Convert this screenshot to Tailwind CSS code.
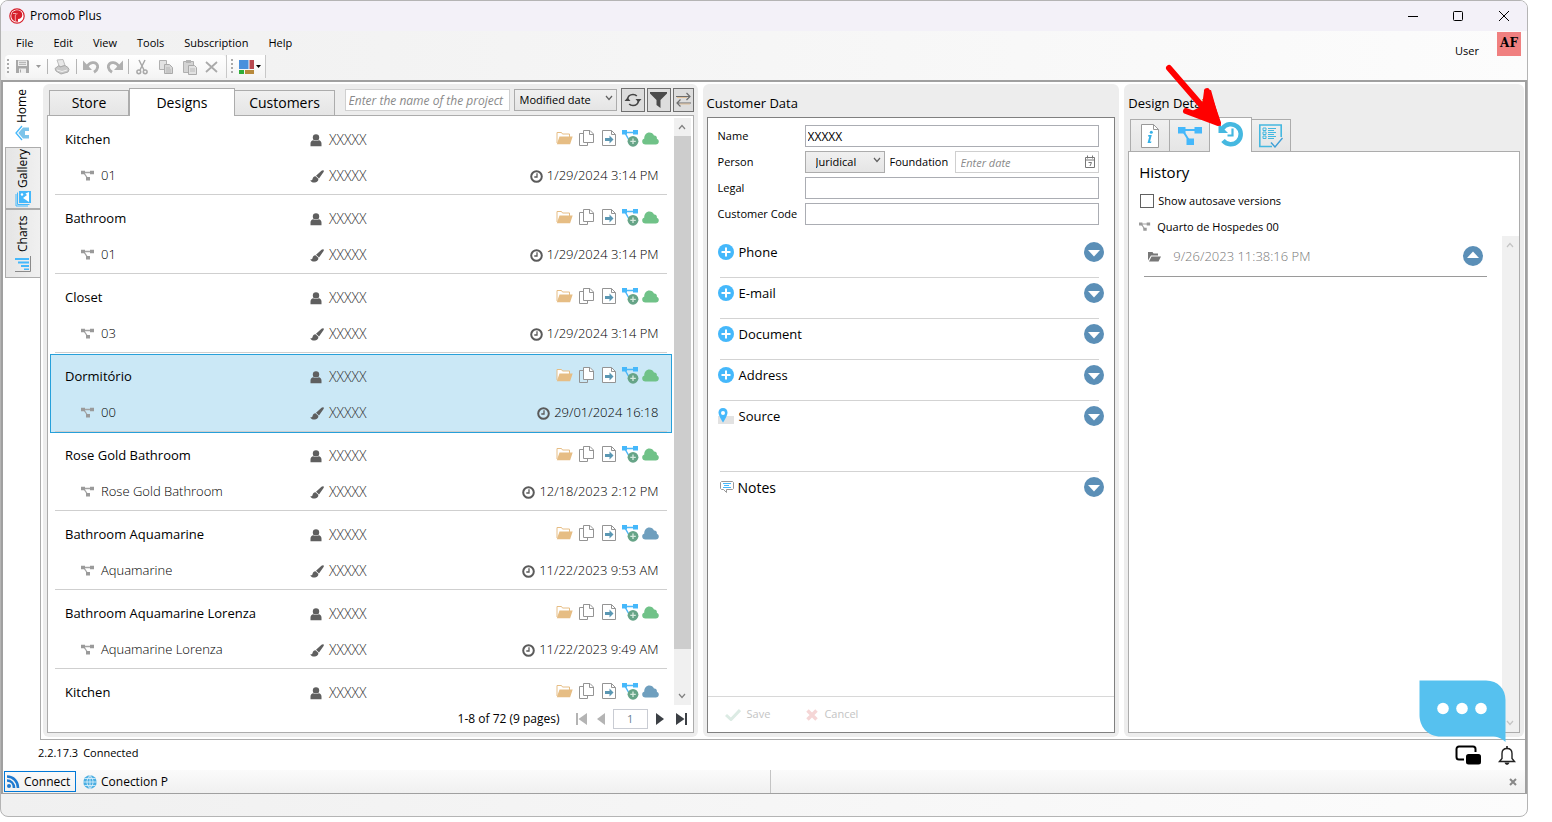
<!DOCTYPE html>
<html lang="en">

<head>
  <meta charset="UTF-8">
  <meta name="viewport" content="width=device-width, initial-scale=1.0">
  <title>Promob Plus</title>
  <script src="https://cdn.jsdelivr.net/npm/@tailwindcss/browser@4"></script>
</head>

<body class="h-screen bg-white pr-6 pb-[5px] overflow-hidden font-['Open_Sans','Noto_Sans',sans-serif] text-[11px] text-black">

  <!-- Shared icons -->
  <svg class="hidden" aria-hidden="true">
    <symbol id="i-person" viewBox="0 0 12 13"><circle cx="6" cy="3.4" r="3.2" fill="#5f5f5f"/><path d="M.5 12.3V9.5C.5 7.3 1.800 6.400 3.300 6.200c1.600 1.200 3.800 1.200 5.400 0 1.500.2 2.800 1.100 2.800 3.300v2.800z" fill="#5f5f5f"/></symbol>
    <symbol id="i-brush" viewBox="0 0 14 13"><path d="M13.600.4c.5.500.2 1.300-.2 1.900L9 8.500 6 5.800 11.500.8c.5-.5 1.500-.8 2.100-.4z" fill="#5f5f5f"/><path d="M5.500 6.300l2.800 2.500c.3 2.500-1.800 3.800-4.100 3.800-2 0-3.300-.9-3.900-2.300 1.500.3 2-.5 2.300-1.600.4-1.400 1.400-2.500 2.900-2.400z" fill="#5f5f5f"/></symbol>
    <symbol id="i-tree" viewBox="0 0 14 12"><path d="M2.500 2.500h9M3 3l4 6" stroke="#a3a3a3" stroke-width="1.300" fill="none"/><path d="M0 .8h4v3.500H0zM9 .8h4v3.500H9zM5 7h4v3.500H5z" fill="#9a9a9a"/></symbol>
    <symbol id="i-clock" viewBox="0 0 13 13"><circle cx="6.500" cy="6.500" r="5.300" fill="none" stroke="#5a5a5a" stroke-width="2"/><path d="M7 3.300V7H4.300" fill="none" stroke="#5a5a5a" stroke-width="1.300"/></symbol>
    <symbol id="i-folder" viewBox="0 0 17 14"><path d="M1 12V1.500h4.500l1 1.500h7V6" fill="#fff" stroke="#e6bd84"/><path d="M.8 13.300L3.500 5.500h13.200l-2.600 7.800z" fill="#e6bd84"/></symbol>
    <symbol id="i-copy" viewBox="0 0 15 17"><path d="M4.500 3.500h-4v12h8v-2.500" fill="none" stroke="#949494"/><path d="M4.500.5H11L14.500 4v8.500h-10z" fill="#fff" stroke="#949494"/><path d="M10.500.5v4h4" fill="none" stroke="#949494"/></symbol>
    <symbol id="i-export" viewBox="0 0 14 16"><path d="M.5.5h9L13.500 4.500v11H.5z" fill="#fff" stroke="#949494"/><path d="M9.500.5v4h4" fill="none" stroke="#949494"/><path d="M3 8h4.500V5.500L11.500 9.500l-4 4V11H3z" fill="#5a97b3"/></symbol>
    <symbol id="i-add" viewBox="0 0 17 17"><path d="M3 2.500h11M3 3l4 7" stroke="#4db8f8" stroke-width="1.500" fill="none"/><path d="M0 0h5v4.500H0zM11 0h5v4.500h-5z" fill="#45b8fb"/><circle cx="11" cy="11.300" r="5.400" fill="#66a487"/><path d="M11 8.500V14M8.300 11.300h5.500" stroke="#d8eadf" stroke-width="1.300"/></symbol>
    <symbol id="i-cloud" viewBox="0 0 17 13"><path d="M3.500 12.500C1.500 12.500.2 11.200.2 9.400c0-1.500.9-2.500 2.100-2.900C2 3.200 4.400.5 7.400.5c2.200 0 3.800 1.200 4.600 3 1.500-.3 2.900.8 2.900 2.500 0 .3 0 .5-.1.800 1.200.4 2 1.400 2 2.700 0 1.700-1.300 3-3 3z" fill="currentColor"/></symbol>
    <symbol id="i-plus" viewBox="0 0 16 16"><circle cx="8" cy="8" r="8" fill="#45b8fb"/><path d="M8 3.500v9M3.500 8h9" stroke="#fff" stroke-width="2"/></symbol>
    <symbol id="i-down" viewBox="0 0 20 20"><circle cx="10" cy="10" r="10" fill="#5b8fb7"/><path d="M4 8h12l-6 6.500z" fill="#fff"/></symbol>
    <symbol id="i-chev" viewBox="0 0 8 6"><path d="M1 1l3 3.500L7 1" fill="none" stroke="currentColor" stroke-width="1.200"/></symbol>
  </svg>

  <div class="relative flex h-full flex-col overflow-hidden rounded-lg border border-[#b4b4b4] bg-gradient-to-r from-[#f0f0f0] to-[#fcfcfc]">

    <!-- Title bar -->
    <header class="flex h-[30px] shrink-0 items-center bg-[#f3f1f8] pl-2">
      <svg class="size-4" viewBox="0 0 16 16"><circle cx="8" cy="8" r="7.200" fill="#fff" stroke="#d6202c" stroke-width="1.200"/><path d="M8 2.300c3.300 0 5.300 1.900 5.300 4.600S11.200 11 9 11v2.700C5 13.900 2.300 11.500 2.300 8S4.800 2.300 8 2.300z" fill="#d6202c"/><path d="M6.300 14V8c0-1.500 1-2.300 2.200-2.300M4 5.500h3" stroke="#f3a9ad" fill="none"/></svg>
      <h1 class="ml-[5px] text-xs">Promob Plus</h1>
      <div class="ml-auto flex">
        <button aria-label="Minimize" class="flex w-[45px] justify-center"><svg class="size-3" viewBox="0 0 12 12"><path d="M1 6.500h10" stroke="#000"/></svg></button>
        <button aria-label="Maximize" class="flex w-[45px] justify-center"><svg class="size-3" viewBox="0 0 12 12"><rect x="1.500" y="1.500" width="9" height="9" rx="1" fill="none" stroke="#000"/></svg></button>
        <button aria-label="Close" class="flex w-[47px] justify-center"><svg class="size-3" viewBox="0 0 12 12"><path d="M1 1l10 10M11 1L1 11" stroke="#000"/></svg></button>
      </div>
    </header>

    <!-- Menu and toolbar -->
    <div class="flex h-[49px] shrink-0 justify-between">
      <div>
        <nav class="flex h-6 items-center gap-5 pl-[15px]">
          <a href="#">File</a>
          <a href="#">Edit</a>
          <a href="#">View</a>
          <a href="#">Tools</a>
          <a href="#">Subscription</a>
          <a href="#">Help</a>
        </nav>
        <div class="flex h-[23px] items-center pl-1">
          <div class="flex h-full items-center rounded-sm bg-gradient-to-b from-white to-[#f4f4f4] pl-0.5 pr-1.5">
            <svg class="h-4 w-0.5" viewBox="0 0 2 16"><path d="M1 0v16" stroke="#aaa" stroke-width="2" stroke-dasharray="2 2"/></svg>
            <button aria-label="Save project" class="ml-1.5 flex items-center gap-1.5">
              <svg class="size-[15px]" viewBox="0 0 15 15"><path d="M1 1h12l1 1v12H1z" fill="#a8a8a8"/><path d="M3 1.500h9V7H3zM4 9.500h7V14H4z" fill="#eee"/><path d="M4 3.300h7M4 5.300h7M5.500 10.500v3" stroke="#aaa"/></svg>
              <svg class="h-[3px] w-[5px]" viewBox="0 0 5 3"><path d="M0 0h5L2.500 3z" fill="#999"/></svg>
            </button>
            <span class="mx-1.5 h-[15px] w-px bg-[#b5b5b5]"></span>
            <button aria-label="Print"><svg class="size-4" viewBox="0 0 16 16"><path d="M3 1l6-.5L11 6.500 5.500 8z" fill="#e8e8e8" stroke="#bbb"/><path d="M1 9.500l4-3 1 1.500 5-1.500 3 2 1 2-1 2.500-7 2L2 12z" fill="#c9c9c9" stroke="#aaa"/><path d="M3 11l5 1.500 5-1.500" fill="none" stroke="#f0f0f0"/></svg></button>
            <span class="mx-1.5 h-[15px] w-px bg-[#b5b5b5]"></span>
            <button aria-label="Undo"><svg class="size-4" viewBox="0 0 16 16"><path d="M4 8c2-5 9-6 10.500-1.500.7 3-.7 5-3.500 6.800" fill="none" stroke="#b0b0b0" stroke-width="2.800"/><path d="M0 1.500V11h9z" fill="#b0b0b0"/></svg></button>
            <button aria-label="Redo" class="ml-2"><svg class="size-4" viewBox="0 0 16 16"><path d="M12 8C10 3 3 2 1.500 6.500c-.7 3 .7 5 3.500 6.800" fill="none" stroke="#b0b0b0" stroke-width="2.800"/><path d="M16 1.500V11H7z" fill="#b0b0b0"/></svg></button>
            <span class="mx-[5px] h-[15px] w-px bg-[#b5b5b5]"></span>
            <button aria-label="Cut"><svg class="size-4" viewBox="0 0 16 16"><path d="M5 1l5 10M11 1L6 11" stroke="#a8a8a8" stroke-width="1.500"/><circle cx="4.800" cy="12.800" r="1.900" fill="none" stroke="#a8a8a8" stroke-width="1.500"/><circle cx="11.200" cy="12.800" r="1.900" fill="none" stroke="#a8a8a8" stroke-width="1.500"/></svg></button>
            <button aria-label="Copy" class="ml-2"><svg class="size-4" viewBox="0 0 16 16"><path d="M1.500 1.500h7v9h-7z" fill="#e2e2e2" stroke="#b0b0b0"/><path d="M6.500 5.500h5l3 3v6h-8z" fill="#d6d6d6" stroke="#aaa"/><path d="M8 9h4M8 11h5M8 13h5" stroke="#aaa" stroke-width=".7"/></svg></button>
            <button aria-label="Paste" class="ml-2"><svg class="size-4" viewBox="0 0 16 16"><path d="M1.500 2.500h10v11h-10z" fill="#d4d4d4" stroke="#b0b0b0"/><path d="M4 1h5v3H4z" fill="#b5b5b5"/><path d="M6.500 6.500h6l2 2v7h-8z" fill="#e2e2e2" stroke="#aaa"/><path d="M8 10h5M8 12h5" stroke="#aaa" stroke-width=".7"/></svg></button>
            <button aria-label="Delete" class="ml-1.5"><svg class="size-4" viewBox="0 0 16 16"><path d="M2 3l11 10M13 3L2 13" stroke="#aaa" stroke-width="1.800"/></svg></button>
          </div>
          <div class="flex h-full items-center border-x border-[#c8c8c8] bg-gradient-to-b from-white to-[#f4f4f4] px-1">
            <svg class="h-4 w-0.5" viewBox="0 0 2 16"><path d="M1 0v16" stroke="#aaa" stroke-width="2" stroke-dasharray="2 2"/></svg>
            <button aria-label="Layout" class="ml-1.5 flex items-center gap-0.5">
              <svg class="size-[15px]" viewBox="0 0 15 15"><path d="M0 1h9.500v9H0z" fill="#4a90dc"/><path d="M10.500 1H15v9h-4.500z" fill="#b84850"/><path d="M0 11h5v4H0z" fill="#2fae38"/><path d="M6 11h9v4H6z" fill="#b88a3c"/></svg>
              <svg class="h-[3px] w-[5px]" viewBox="0 0 5 3"><path d="M0 0h5L2.500 3z" fill="#000"/></svg>
            </button>
          </div>
        </div>
      </div>
      <div class="flex pr-1.5">
        <span class="mt-3 mr-[18px]">User</span>
        <button class="mt-px size-6 bg-[#f08080] pb-0.5 font-['DejaVu_Serif',serif] text-xs leading-none font-bold">AF</button>
      </div>
    </div>

    <!-- Work area -->
    <div class="flex min-h-0 flex-1 border-x-2 border-t-2 border-[#a0a0a0] bg-white">
      <aside class="flex w-[38px] shrink-0 flex-col text-xs">
        <button class="flex h-[65px] rotate-180 items-center justify-center gap-[3px] [writing-mode:vertical-rl]">
          <svg class="h-3.5 w-4 rotate-90" viewBox="0 0 16 14"><path d="M1 7L8 1l7 6" fill="none" stroke="#45b8fb" stroke-width="1.300"/><path d="M2.500 8L8 3.300 13.500 8V14H10v-4H6v4H2.500z" fill="#7cc4ea"/></svg>
          <span>Home</span>
        </button>
        <button class="ml-0.5 flex h-[62px] rotate-180 items-center justify-center gap-[3px] border border-[#acacac] bg-gradient-to-r from-[#f0f0f0] to-[#e5e5e5] [writing-mode:vertical-rl]">
          <svg class="size-4 rotate-90" viewBox="0 0 16 16"><path d="M1 13V1h12M2.500 14.500v-12h12" fill="none" stroke="#45b8fb"/><rect x="4" y="4" width="12" height="12" fill="#45b8fb"/><path d="M5 14l4-6 3 4 1.500-1.500L15 14z" fill="#fff"/><circle cx="12.500" cy="7" r="1.200" fill="#fff"/></svg>
          <span>Gallery</span>
        </button>
        <button class="ml-0.5 flex h-[69px] rotate-180 items-center justify-center gap-1 border border-[#acacac] bg-gradient-to-r from-[#f0f0f0] to-[#e5e5e5] [writing-mode:vertical-rl]">
          <svg class="size-4 rotate-180" viewBox="0 0 16 16"><path d="M0 2h14v2H0zM3 5.500h11v2H3zM6 9h8v2H6zM9 12.500h5v1.500H9z" fill="#45b8fb"/><path d="M15.500 0v15.500H0" fill="none" stroke="#8a8a8a"/></svg>
          <span>Charts</span>
        </button>
        <div class="flex-1 border-r border-[#acacac]"></div>
      </aside>

      <main class="grid min-w-0 flex-1 grid-cols-[655fr_417fr_400fr] gap-[5px] border-b border-[#acacac] py-0.5 pr-px pl-0.5">

        <!-- Designs -->
        <section class="flex min-h-0 min-w-0 flex-col rounded-md bg-[#ededed] p-1 pt-0">
          <div class="flex h-[31px] shrink-0 items-end">
            <div class="flex items-end pl-0.5 text-sm" role="tablist">
              <button role="tab" class="h-[25px] w-20 border border-b-0 border-[#acacac] bg-gradient-to-b from-[#f0f0f0] to-[#e5e5e5]">Store</button>
              <button role="tab" aria-selected="true" class="relative z-10 -mb-px h-7 w-[106px] border border-b-0 border-[#acacac] bg-white">Designs</button>
              <button role="tab" class="h-[25px] w-[100px] border border-l-0 border-b-0 border-[#acacac] bg-gradient-to-b from-[#f0f0f0] to-[#e5e5e5]">Customers</button>
            </div>
            <div class="mb-[3px] ml-auto flex items-center">
              <input type="text" aria-label="Project name" placeholder="Enter the name of the project or customer" class="h-[22px] w-[165px] border border-[#d0d0d0] bg-white px-[3px] text-xs placeholder:text-[#8a8a8a] placeholder:italic">
              <div class="relative ml-1">
                <select aria-label="Sort by" class="h-[22px] w-[103px] appearance-none border border-[#acacac] bg-gradient-to-b from-[#f0f0f0] to-[#e5e5e5] pl-[5px] text-[11px]"><option>Modified date</option></select>
                <svg class="pointer-events-none absolute top-1.5 right-1 h-1.5 w-2 text-[#606060]"><use href="#i-chev"/></svg>
              </div>
              <button aria-label="Refresh" class="ml-1 flex size-6 items-center justify-center border border-[#707070] bg-[#dddddd]"><svg class="h-4 w-[18px]" viewBox="0 0 18 16"><path d="M3.500 8C3.500 4.500 6 2.500 9 2.500c1.500 0 2.800.4 3.800 1.500M14.500 8c0 3.500-2.500 5.500-5.500 5.500-1.500 0-2.800-.4-3.800-1.500" fill="none" stroke="#444" stroke-width="1.600"/><path d="M.5 9h6L3.500 5.500zM11.500 7h6L14.500 10.500z" fill="#444"/></svg></button>
              <button aria-label="Filter" class="ml-0.5 flex size-6 items-center justify-center border border-[#707070] bg-[#dddddd]"><svg class="h-4 w-[17px]" viewBox="0 0 17 16"><path d="M0 0h17v1.500L10.500 8v8L6.500 13V8L0 1.500z" fill="#4b4b4b"/></svg></button>
              <button aria-label="Swap" class="ml-0.5 flex h-6 w-[21px] items-center justify-center border border-[#707070] bg-[#dddddd]"><svg class="h-4 w-[15px]" viewBox="0 0 15 16"><path d="M0 4.500h14M10.500 1l3.500 3.500L10.500 8" fill="none" stroke="#6d6d6d" stroke-width="1.200"/><path d="M15 11H1M4.500 7.500L1 11l3.500 3.500" fill="none" stroke="#6d6d6d" stroke-width="1.200"/><path d="M1 5.500h10M4 12h10" stroke="#dfb98a" stroke-width=".8"/></svg></button>
            </div>
          </div>
          <div class="flex min-h-0 flex-1 flex-col border border-[#acacac] bg-white">
            <div class="flex min-h-0 flex-1 pt-px">
              <ul id="designList" class="ml-0.5 min-w-0 flex-1 overflow-hidden text-[13px]"></ul>
              <div class="mt-px mr-0.5 ml-0.5 flex w-[17px] flex-col items-center bg-[#f0f0f0]">
                <svg class="my-1.5 h-1.5 w-2 rotate-180 text-[#808080]"><use href="#i-chev"/></svg>
                <div class="w-full flex-[514] bg-[#cdcdcd]"></div>
                <div class="flex-[38]"></div>
                <svg class="my-1.5 h-1.5 w-2 text-[#808080]"><use href="#i-chev"/></svg>
              </div>
            </div>
            <div class="flex h-[27px] shrink-0 items-center justify-end pr-1.5">
              <span class="text-xs">1-8 of 72 (9 pages)</span>
              <button aria-label="First page" class="ml-4"><svg class="h-3 w-[11px]" viewBox="0 0 11 12"><path d="M0 0h2v12H0zM11 0v12L2.500 6z" fill="#b4b4b4"/></svg></button>
              <button aria-label="Previous page" class="ml-2.5"><svg class="h-3 w-2" viewBox="0 0 8 12"><path d="M8 0v12L0 6z" fill="#b4b4b4"/></svg></button>
              <input type="text" aria-label="Page" value="1" class="mx-2 h-5 w-[35px] border border-[#c9ccd3] bg-white text-center text-[11px] text-[#6a7f92]">
              <button aria-label="Next page"><svg class="h-3 w-2" viewBox="0 0 8 12"><path d="M0 0v12L8 6z" fill="#3c4045"/></svg></button>
              <button aria-label="Last page" class="ml-3"><svg class="h-3 w-[11px]" viewBox="0 0 11 12"><path d="M9 0h2v12H9zM0 0v12L8.500 6z" fill="#3c4045"/></svg></button>
            </div>
          </div>
        </section>

        <!-- Customer data -->
        <section class="flex min-h-0 min-w-0 flex-col rounded-md bg-[#ededed] p-1 pt-0">
          <h2 class="flex h-[33px] shrink-0 items-center pt-1.5 text-[13px]">Customer Data</h2>
          <div class="flex min-h-0 flex-1 flex-col border border-[#808080] bg-white">
            <form class="grid grid-cols-[87px_1fr] items-center gap-y-1 pt-[7px] pr-[15px] pl-2.5">
              <label for="custName">Name</label>
              <input id="custName" type="text" value="XXXXX" class="h-[22px] w-full min-w-0 border border-[#abadb3] px-0.5 text-xs">
              <label for="custPerson">Person</label>
              <div class="flex items-center">
                <div class="relative">
                  <select id="custPerson" class="h-[22px] w-20 appearance-none border border-[#acacac] bg-gradient-to-b from-[#f0f0f0] to-[#e5e5e5] pl-2.5"><option>Juridical</option></select>
                  <svg class="pointer-events-none absolute top-1.5 right-1 h-1.5 w-2 text-[#606060]"><use href="#i-chev"/></svg>
                </div>
                <label for="custDate" class="ml-[5px] w-[65px]">Foundation</label>
                <div class="relative min-w-0 flex-1">
                  <input id="custDate" type="text" placeholder="Enter date" class="h-[22px] w-full border border-[#cfcfcf] px-[5px] placeholder:text-[#8a8a8a] placeholder:italic">
                  <svg class="absolute top-1 right-1 h-[13px] w-2.5" viewBox="0 0 10 13"><path d="M.5 2.500h9v10h-9zM.5 5h9" fill="none" stroke="#777"/><path d="M2.500.5v3M7.500.5v3M3.500 7.500h3L5 11" fill="none" stroke="#777"/></svg>
                </div>
              </div>
              <label for="custLegal">Legal</label>
              <input id="custLegal" type="text" class="h-[22px] w-full min-w-0 border border-[#abadb3] px-0.5 text-xs">
              <label for="custCode">Customer Code</label>
              <input id="custCode" type="text" class="h-[22px] w-full min-w-0 border border-[#abadb3] px-0.5 text-xs">
            </form>

            <div class="mt-3 flex flex-col pr-2.5 pl-2.5 text-[13px]">
              <div class="h-10 pt-[5px]"><div class="flex h-5 items-center gap-[5px]"><svg class="size-4"><use href="#i-plus"/></svg><h3 class="pt-0.5">Phone</h3><button aria-label="Expand phone" class="ml-auto"><svg class="size-5"><use href="#i-down"/></svg></button></div></div>
              <hr class="mr-[5px] ml-0.5 border-[#d3d3d3]">
              <div class="h-10 pt-[5px]"><div class="flex h-5 items-center gap-[5px]"><svg class="size-4"><use href="#i-plus"/></svg><h3 class="pt-0.5">E-mail</h3><button aria-label="Expand e-mail" class="ml-auto"><svg class="size-5"><use href="#i-down"/></svg></button></div></div>
              <hr class="mr-[5px] ml-0.5 border-[#d3d3d3]">
              <div class="h-10 pt-[5px]"><div class="flex h-5 items-center gap-[5px]"><svg class="size-4"><use href="#i-plus"/></svg><h3 class="pt-0.5">Document</h3><button aria-label="Expand document" class="ml-auto"><svg class="size-5"><use href="#i-down"/></svg></button></div></div>
              <hr class="mr-[5px] ml-0.5 border-[#d3d3d3]">
              <div class="h-10 pt-[5px]"><div class="flex h-5 items-center gap-[5px]"><svg class="size-4"><use href="#i-plus"/></svg><h3 class="pt-0.5">Address</h3><button aria-label="Expand address" class="ml-auto"><svg class="size-5"><use href="#i-down"/></svg></button></div></div>
              <hr class="mr-[5px] ml-0.5 border-[#d3d3d3]">
              <div class="h-[70px] pt-[5px]"><div class="flex h-5 items-center gap-[5px]"><svg class="size-4" viewBox="0 0 16 16"><path d="M0 8h16v8H0z" fill="#e2e2e2"/><path d="M5 0c2.800 0 4.500 2 4.500 4.500C9.500 8 5 14.500 5 14.500S.5 8 .5 4.500C.5 2 2.200 0 5 0z" fill="#45b8fb"/><circle cx="5" cy="5" r="2" fill="#fff"/></svg><h3 class="pt-0.5">Source</h3><button aria-label="Expand source" class="ml-auto"><svg class="size-5"><use href="#i-down"/></svg></button></div></div>
              <hr class="mr-[5px] ml-0.5 border-[#d3d3d3]">
              <div class="h-10 pt-[5px]"><div class="flex h-5 items-center gap-1 pl-0.5 text-sm"><svg class="h-3 w-3.5" viewBox="0 0 14 12"><path d="M1.500.5h11l1 1v6l-1 1H6.500v3L3.500 8.500h-2l-1-1v-6z" fill="#fff" stroke="#999"/><path d="M3 2.500h8M4 4.500h5M3 6.500h8" stroke="#45b8fb"/></svg><h3 class="pt-0.5">Notes</h3><button aria-label="Expand notes" class="ml-auto"><svg class="size-5"><use href="#i-down"/></svg></button></div></div>
            </div>

            <div class="mt-auto flex h-9 items-center gap-9 border-t border-[#d8d8d8] pl-[17px] text-[#c4c4c4]">
              <button class="flex items-center gap-1.5"><svg class="h-3 w-4" viewBox="0 0 16 12"><path d="M1 6l5 4.500L15 1" fill="none" stroke="#dcebe4" stroke-width="3"/></svg>Save</button>
              <button class="flex items-center gap-1.5"><svg class="size-3" viewBox="0 0 12 12"><path d="M1.500 1.500l9 9M10.500 1.500l-9 9" stroke="#f5d6d6" stroke-width="3.500"/></svg>Cancel</button>
            </div>
          </div>
        </section>

        <!-- Design details -->
        <section class="relative flex min-h-0 min-w-0 flex-col rounded-md bg-[#ededed] p-1 pt-0">
          <h2 class="flex h-[33px] shrink-0 items-center pt-1.5 text-[13px]">Design Details</h2>
          <div class="flex h-[34px] shrink-0 items-end pl-0.5" role="tablist">
            <button role="tab" aria-label="Information" class="flex h-8 w-10 items-center justify-center border border-b-0 border-[#acacac] bg-gradient-to-b from-[#f0f0f0] to-[#e5e5e5]"><svg class="h-6 w-[18px]" viewBox="0 0 18 24"><path d="M.5.5h12l5 5v18H.5z" fill="#fff" stroke="#999"/><path d="M12.500.5v5h5" fill="none" stroke="#999"/><path d="M7.300 11h3.500l-1.800 6.500h1.500l-.5 1.500H6.500L8.300 12.500H7z" fill="#35b1e8"/><circle cx="10.300" cy="8.300" r="1.500" fill="#35b1e8"/></svg></button>
            <button role="tab" aria-label="Structure" class="flex h-8 w-[39px] items-center justify-center border border-x-0 border-b-0 border-[#acacac] bg-gradient-to-b from-[#f0f0f0] to-[#e5e5e5]"><svg class="h-5 w-6" viewBox="0 0 24 20"><path d="M4 4h16M5 5l7 11" stroke="#45b8fb" stroke-width="2" fill="none"/><path d="M0 1h7.500v6.500H0zM16.500 1H24v6.500h-7.500zM8.500 12.500H16V19H8.500z" fill="#45b8fb"/></svg></button>
            <button role="tab" aria-selected="true" aria-label="History" class="relative -mb-px flex h-[35px] w-[43px] items-center justify-center border border-b-0 border-[#acacac] bg-white pb-0.5"><svg class="size-[26px]" viewBox="0 0 26 26"><path d="M4.500 7.500A10 10 0 1 1 5 19.500" fill="none" stroke="#45b8e0" stroke-width="4.500"/><path d="M.5 2.500V12H10z" fill="#45b8e0"/><path d="M14.500 7.500v7H9.500" fill="none" stroke="#45b8e0" stroke-width="2.200"/></svg></button>
            <button role="tab" aria-label="Checklist" class="flex h-8 w-[39px] items-center justify-center border border-l-0 border-b-0 border-[#acacac] bg-gradient-to-b from-[#f0f0f0] to-[#e5e5e5]"><svg class="size-6" viewBox="0 0 24 24"><path d="M13 22.500H.8V1h21.400v12" fill="none" stroke="#45b8e0" stroke-width="1.600"/><path d="M4 4h3v2.500H4zM4 8h3v2.500H4zM4 12h3v2.500H4z" fill="none" stroke="#45b8e0"/><path d="M9 4.500h8M9 6.500h6M9 8.500h8M9 10.500h6M9 12.500h8M9 14.500h6" stroke="#45b8e0"/><path d="M12 18.500l4 4.500 7.500-9" fill="none" stroke="#3f9fd6" stroke-width="1.400"/></svg></button>
          </div>
          <div class="flex min-h-0 flex-1 flex-col border border-[#acacac] bg-white">
            <div class="shrink-0 pt-2 pl-2.5">
              <h3 class="text-[15px] leading-6">History</h3>
              <div class="mt-2 flex h-[18px] items-center gap-1 pl-px">
                <input id="autosave" type="checkbox" class="size-3.5 appearance-none border border-[#606060] bg-white">
                <label for="autosave">Show autosave versions</label>
              </div>
              <div class="mt-2 flex h-[18px] items-center gap-1.5"><svg class="h-3 w-3"><use href="#i-tree"/></svg><span>Quarto de Hospedes 00</span></div>
            </div>
            <div class="flex min-h-0 flex-1">
              <div class="flex-1 pr-[15px] pl-[15px]">
                <div class="flex h-[41px] items-center border-b border-[#9a9a9a] pr-1">
                  <svg class="ml-1 h-[11px] w-[13px]" viewBox="0 0 13 11"><path d="M0 9.500V1h4.500l1 1.500H10V4.500H3z" fill="#777"/><path d="M1 10.500L3.500 5.500H13l-2.500 5z" fill="#777"/></svg>
                  <span class="ml-3 pt-0.5 text-[13px] font-light text-[#777]">9/26/2023 11:38:16 PM</span>
                  <button aria-label="Collapse version" class="ml-auto"><svg class="size-5 rotate-180"><use href="#i-down"/></svg></button>
                </div>
              </div>
              <div class="flex w-[17px] flex-col items-center justify-between bg-[#f0f0f0] py-1.5 text-[#c4c4c4]">
                <svg class="h-1.5 w-2 rotate-180"><use href="#i-chev"/></svg>
                <svg class="h-1.5 w-2"><use href="#i-chev"/></svg>
              </div>
            </div>
          </div>

          <!-- Pointer over the history tab -->
          <svg class="pointer-events-none absolute -top-5 left-10 z-20 h-16 w-[62px]" viewBox="0 0 62 64"><path d="M5 4L44 49" fill="none" stroke="#f00" stroke-width="6" stroke-linecap="round"/><path d="M43 27L54 59M22 47L54 59" fill="none" stroke="#f00" stroke-width="6" stroke-linecap="round"/><path d="M40 27l-2 15L30 46l-8 3 35 13-10-36z" fill="#f00"/></svg>
        </section>
      </main>
    </div>

    <!-- Status -->
    <div class="flex h-[30px] shrink-0 items-center gap-[5px] border-x-2 border-[#a0a0a0] bg-white pr-[9px] pl-[35px]">
      <span class="pb-1">2.2.17.3</span>
      <span class="pb-1">Connected</span>
      <button aria-label="Windows" class="ml-auto"><svg class="h-5 w-[26px]" viewBox="0 0 26 20"><path d="M9 14.500H4A2.500 2.500 0 0 1 1.500 12V4A2.500 2.500 0 0 1 4 1.500h14A2.500 2.500 0 0 1 20.500 4v3" fill="none" stroke="#000" stroke-width="2"/><rect x="11" y="9" width="15" height="10.500" rx="2.500"/></svg></button>
      <button aria-label="Notifications" class="ml-3"><svg class="h-[19px] w-[18px]" viewBox="0 0 18 19"><path d="M1.500 15.500L4 12.500V7.500C4 4.500 6 2.500 9 2.500s5 2 5 5v5l2.500 3z" fill="none" stroke="#222" stroke-width="1.400"/><path d="M6.500 16.500h5C11 18 10 18.800 9 18.800S7 18 6.500 16.500zM8.200 0h1.600v3H8.200z" fill="#222"/></svg></button>
    </div>

    <!-- Open connections -->
    <div class="flex h-6 shrink-0 items-center border-x-2 border-b border-[#a0a0a0] bg-gradient-to-b from-[#fbfbfb] to-[#f0f0f0] text-xs">
      <div class="flex h-full flex-[77] items-center border-r border-[#c4c4c4] pl-px">
        <button class="flex h-[21px] w-[72px] items-center gap-1 border border-[#0078d7] pl-0.5"><svg class="size-[13px]" viewBox="0 0 13 13"><circle cx="2" cy="11" r="2" fill="#1f7ad0"/><path d="M0 5.500c4 0 7 3 7 7.500M0 1.500c6.500 0 11 5 11 11.500" fill="none" stroke="#1f7ad0" stroke-width="2.600"/></svg>Connect</button>
        <button class="ml-[7px] flex items-center gap-1"><svg class="size-3.5" viewBox="0 0 14 14"><circle cx="7" cy="7" r="6.700" fill="#4aaee2"/><path d="M0 7h14M1.500 3.500h11M1.500 10.500h11M7 0v14M7 .5C3 4 3 10 7 13.500M7 .5c4 3.500 4 9.500 0 13" fill="none" stroke="#e4f4fd" stroke-width=".8"/></svg>Conection P</button>
      </div>
      <div class="flex flex-[75] justify-end pr-2">
        <button aria-label="Close connections"><svg class="size-2" viewBox="0 0 8 8"><path d="M1 1l6 6M7 1L1 7" stroke="#888" stroke-width="2"/></svg></button>
      </div>
    </div>
    <footer class="h-[22px] shrink-0"></footer>

    <!-- Chat -->
    <button aria-label="Chat" class="absolute right-[21px] bottom-[74px] z-30"><svg class="h-[62px] w-[87px]" viewBox="0 0 87 62"><path d="M.5.500H67C79 .5 86.500 9 86.500 20v42C83 58.500 79 56.500 72 56.500H22C8 56.500.5 46 .5 35z" fill="#56c1ef"/><circle cx="24" cy="28.500" r="5.800" fill="#fff"/><circle cx="43" cy="28.500" r="5.800" fill="#fff"/><circle cx="62" cy="28.500" r="5.800" fill="#fff"/></svg></button>
  </div>

  <script>
    const designs = [
      { title: "Kitchen", version: "01", date: "1/29/2024 3:14 PM", synced: true },
      { title: "Bathroom", version: "01", date: "1/29/2024 3:14 PM", synced: true },
      { title: "Closet", version: "03", date: "1/29/2024 3:14 PM", synced: true },
      { title: "Dormitório", version: "00", date: "29/01/2024 16:18", synced: true, selected: true },
      { title: "Rose Gold Bathroom", version: "Rose Gold Bathroom", date: "12/18/2023 2:12 PM", synced: true },
      { title: "Bathroom Aquamarine", version: "Aquamarine", date: "11/22/2023 9:53 AM", synced: false },
      { title: "Bathroom Aquamarine Lorenza", version: "Aquamarine Lorenza", date: "11/22/2023 9:49 AM", synced: true },
      { title: "Kitchen", version: "", date: "", synced: false }
    ];

    document.getElementById('designList').innerHTML = designs.map(d => `
      <li class="h-[79px] border px-1 ${d.selected ? 'border-[#26a0da] bg-[#cbe8f6]' : 'border-transparent'}">
        <div class="grid h-full grid-cols-[245px_1fr_auto] grid-rows-[28px_28px] gap-y-2 border-b border-[#cfcfcf] pt-2 pr-2 pl-2.5">
          <h3 class="flex items-center">${d.title}</h3>
          <span class="flex items-center gap-[7px] text-sm font-light text-[#333]"><svg class="h-[13px] w-3"><use href="#i-person"/></svg>XXXXX</span>
          <div class="flex h-6 items-center justify-end">
            <button aria-label="Open"><svg class="h-3.5 w-[17px]"><use href="#i-folder"/></svg></button>
            <button aria-label="Copy" class="ml-1.5"><svg class="h-[17px] w-[15px]"><use href="#i-copy"/></svg></button>
            <button aria-label="Export" class="ml-2"><svg class="h-4 w-3.5"><use href="#i-export"/></svg></button>
            <button aria-label="New version" class="ml-1.5"><svg class="size-[17px]"><use href="#i-add"/></svg></button>
            <button aria-label="Cloud" class="ml-[3px] ${d.synced ? 'text-[#70c288]' : 'text-[#6f9fbe]'}"><svg class="h-[13px] w-[17px]"><use href="#i-cloud"/></svg></button>
          </div>
          <span class="flex items-center gap-1.5 pl-4 font-light">${d.version ? `<svg class="h-3 w-3.5"><use href="#i-tree"/></svg>${d.version}` : ''}</span>
          <span class="flex items-center gap-[5px] text-sm font-light text-[#333]">${d.date ? '<svg class="h-[13px] w-3.5"><use href="#i-brush"/></svg>XXXXX' : ''}</span>
          <span class="flex items-center justify-end gap-1 font-light">${d.date ? `<svg class="size-[13px]"><use href="#i-clock"/></svg>${d.date}` : ''}</span>
        </div>
      </li>`).join('');
  </script>
</body>

</html>
